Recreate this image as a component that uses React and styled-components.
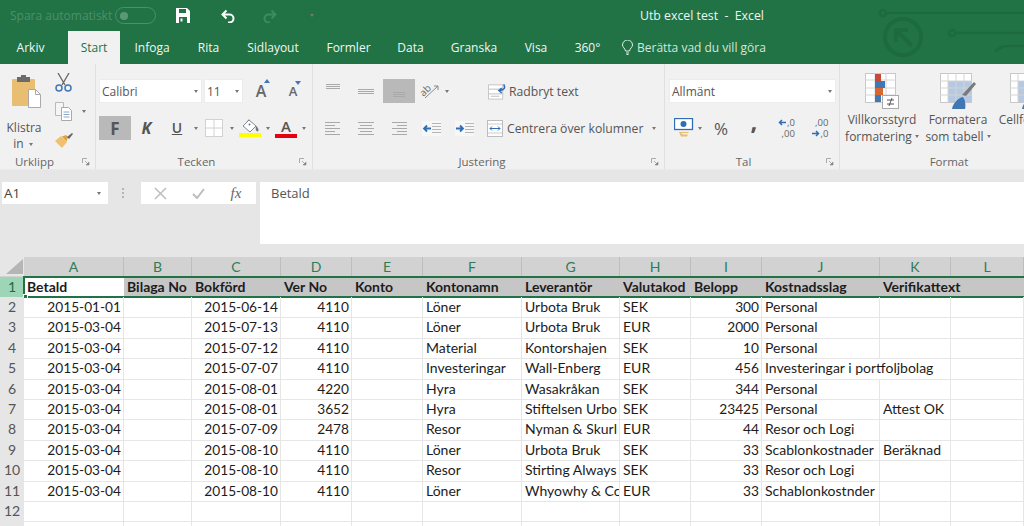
import React from 'react'
import styled, { createGlobalStyle } from 'styled-components'

const GlobalStyle = createGlobalStyle`
  html, body { margin: 0; padding: 0; height: 526px; overflow: hidden; background: #fff; }
  body { font-family: "Open Sans", "Noto Sans", sans-serif; }
  #root { width: 1024px; height: 526px; overflow: hidden; }
`

const GREEN = '#217346'
const COLUMNS = '24px 100px 68px 89px 71px 71px 99px 98px 71px 71px 118px 71px 73px'

const Page = styled.div`
  width: 1024px;
  height: 526px;
  overflow: hidden;
  display: flex;
  flex-direction: column;
  background: #e6e6e6;
`

const Header = styled.header`
  position: relative;
  background: ${GREEN};
  color: #fff;
  height: 64px;
  flex: none;
`

const Circuit = styled.svg`
  position: absolute;
  right: 0;
  top: 0;
`

const TitleBar = styled.div`
  position: relative;
  height: 31px;
  display: flex;
  align-items: center;
  padding-left: 10px;
  font-size: 12px;
`

const AutoSave = styled.span`
  color: #4d8f6b;
  width: 105px;
  white-space: nowrap;
`

const Toggle = styled.span`
  width: 35px;
  height: 15px;
  border: 1px solid #4d8f6b;
  border-radius: 9px;
  display: flex;
  align-items: center;
  padding-left: 4px;
  margin-right: 9px;
  flex: none;
`

const ToggleKnob = styled.span`
  width: 8px;
  height: 8px;
  border-radius: 50%;
  background: #5b9878;
`

const QuickSlot = styled.span`
  width: ${p => p.$w}px;
  display: flex;
  justify-content: center;
  flex: none;
`

const WindowTitle = styled.span`
  margin-left: 301px;
  white-space: pre;
  font-size: 12.3px;
  color: #eef5f1;
`

const TabBar = styled.nav`
  position: relative;
  height: 33px;
  display: flex;
  padding-left: 3px;
  font-size: 12px;
`

const Tab = styled.div`
  width: ${p => p.$w}px;
  margin-left: ${p => p.$gap || 0}px;
  display: flex;
  align-items: center;
  justify-content: center;
  color: ${p => (p.$active ? GREEN : '#f1f7f4')};
  background: ${p => (p.$active ? '#f1f1f1' : 'transparent')};
  flex: none;
`

const TellMe = styled.div`
  margin-left: 8px;
  display: flex;
  align-items: center;
  gap: 4px;
  color: #d5e6dc;
  white-space: nowrap;
`

const Ribbon = styled.section`
  height: 106px;
  flex: none;
  display: flex;
  background: #f1f1f1;
  border-bottom: 1px solid #eaeaea;
  box-sizing: border-box;
  color: #555;
  font-size: 12px;
`

const Group = styled.div`
  width: ${p => p.$w}px;
  flex: none;
  display: flex;
  flex-direction: column;
  border-right: 1px solid #e0e0e0;
  box-sizing: border-box;
  &:last-child { border-right: 0; }
`

const GroupBody = styled.div`
  height: 91px;
  flex: none;
  padding: 15px 0 0 ${p => p.$left || 0}px;
  display: flex;
  flex-direction: column;
  gap: 13px;
  box-sizing: border-box;
`

const GroupLabel = styled.div`
  height: 14px;
  flex: none;
  display: grid;
  grid-template-columns: 1fr auto 1fr;
  align-items: center;
  padding-right: ${p => p.$right ?? 5}px;
  font-size: 11.5px;
  color: #666;
  line-height: 14px;
  margin-left: ${p => p.$left || 0}px;
`

const GroupName = styled.span`
  grid-column: 2;
  margin-left: ${p => p.$shift || 0}px;
`

const Launcher = styled.svg`
  justify-self: end;
  grid-column: 3;
`

const Row = styled.div`
  display: flex;
  align-items: center;
  height: 24px;
  flex: none;
`

const Slot = styled.div`
  width: ${p => p.$w}px;
  height: 24px;
  margin-left: ${p => p.$ml || 0}px;
  display: flex;
  align-items: center;
  justify-content: center;
  flex: none;
  background: ${p => (p.$on ? '#b9b9b9' : 'transparent')};
`

const Caret = styled.span`
  width: 0;
  height: 0;
  display: block;
  flex: none;
  margin: 0 ${p => p.$m ?? 2}px;
  border-left: 2.5px solid transparent;
  border-right: 2.5px solid transparent;
  border-top: 3px solid #777;
`

const InlineCaret = styled(Caret)`
  display: inline-block;
  vertical-align: 2px;
`

const ComboBox = styled.div`
  width: ${p => p.$w}px;
  height: 24px;
  margin-right: ${p => p.$mr || 0}px;
  background: #fff;
  border: 1px solid #ececec;
  box-sizing: border-box;
  display: flex;
  align-items: center;
  justify-content: space-between;
  padding: 0 1px 0 2px;
  color: #555;
  flex: none;
`

const PasteGrid = styled.div`
  height: 91px;
  flex: none;
  display: grid;
  grid-template-columns: 48px 47px;
`

const PasteColumn = styled.div`
  display: flex;
  flex-direction: column;
  align-items: center;
  padding-top: 11px;
  line-height: 16px;
  text-align: center;
  gap: 11px;
  color: #555;
`

const PasteSvg = styled.svg`
  margin-left: 5px;
`

const ClipColumn = styled.div`
  display: flex;
  flex-direction: column;
  padding: 8px 0 0 7px;
  gap: 9px;
`

const ClipRow = styled.div`
  display: flex;
  align-items: center;
  height: 20px;
  gap: 8px;
`

const BoldLetter = styled.span`
  font-weight: ${p => p.$weight || 700};
  font-size: ${p => p.$size || 16}px;
  font-style: ${p => (p.$italic ? 'italic' : 'normal')};
  text-decoration: ${p => (p.$under ? 'underline' : 'none')};
  color: #555;
  line-height: 1;
`

const CommaMark = styled(BoldLetter)`
  font-size: 24px;
  margin-top: -15px;
`

const PercentSign = styled.span`
  font-size: 17px;
`

const GrowLetter = styled.span`
  position: relative;
  font-size: ${p => p.$size}px;
  color: #666;
  line-height: 1;
  font-weight: 600;
`

const GrowMark = styled.svg`
  position: absolute;
  top: -4px;
  right: -4px;
`

const ColorStack = styled.div`
  display: flex;
  flex-direction: column;
  align-items: center;
  width: 22px;
`

const ColorBar = styled.span`
  display: block;
  width: 22px;
  height: 4px;
  background: ${p => p.$color};
`

const ActionText = styled.span`
  margin-left: ${p => p.$ml}px;
  font-size: 12.2px;
  white-space: nowrap;
  color: #555;
`

const OrientBox = styled.span`
  position: relative;
  width: 20px;
  height: 16px;
  display: block;
`

const OrientText = styled.span`
  position: absolute;
  left: 0;
  top: 1px;
  font-size: 10px;
  line-height: 12px;
  color: #666;
  transform: rotate(-45deg);
`

const OrientArrow = styled.svg`
  position: absolute;
  left: 0;
  top: 0;
`

const StyleColumns = styled.div`
  height: 91px;
  flex: none;
  padding: 9px 0 0 4px;
  box-sizing: border-box;
  display: flex;
`

const StyleButton = styled.div`
  width: ${p => p.$w || 76}px;
  flex: none;
  display: flex;
  flex-direction: column;
  align-items: center;
  text-align: center;
  line-height: 17px;
  font-size: 12px;
  white-space: nowrap;
  color: #555;
`

const StyleLine = styled.span`
  display: flex;
  align-items: center;
  gap: 3px;
  height: 17px;
  margin-top: ${p => p.$top || 0}px;
`

const FormulaArea = styled.section`
  height: 87px;
  flex: none;
  display: flex;
  align-items: flex-start;
  padding: 12px 0 0 2px;
  box-sizing: border-box;
  background: #e6e6e6;
`

const NameBox = styled.div`
  width: 106px;
  height: 22px;
  background: #fff;
  display: flex;
  align-items: center;
  justify-content: space-between;
  padding: 0 5px 0 2px;
  box-sizing: border-box;
  font-size: 13.5px;
  color: #444;
  flex: none;
`

const Grip = styled.div`
  width: 30px;
  height: 22px;
  margin-right: 3px;
  flex: none;
  display: flex;
  flex-direction: column;
  align-items: center;
  justify-content: center;
  gap: 2px;
`

const GripDot = styled.span`
  width: 2px;
  height: 2px;
  background: #b5b5b5;
`

const FormulaButtons = styled.div`
  width: 115px;
  height: 22px;
  margin-right: 4px;
  flex: none;
  background: #fff;
  display: flex;
  align-items: center;
`

const FxSlot = styled.span`
  width: 38px;
  display: flex;
  justify-content: center;
  font-family: "Liberation Serif", serif;
  font-style: italic;
  font-size: 15px;
  color: #666;
`

const FormulaInput = styled.div`
  flex: 1;
  height: 62px;
  background: #fff;
  padding: 2px 0 0 11px;
  box-sizing: border-box;
  font-size: 13px;
  line-height: 18px;
  color: #555;
`

const Sheet = styled.section`
  flex: 1;
  background: #fff;
  font-family: Lato, "Liberation Sans", sans-serif;
  font-size: 14px;
  color: #1c1c1c;
  overflow: hidden;
`

const ColumnHeaderRow = styled.div`
  display: grid;
  grid-template-columns: ${COLUMNS};
  height: 20px;
  background: #d2d2d2;
`

const Corner = styled.div`
  background: #e6e6e6;
  display: flex;
  align-items: flex-end;
  justify-content: flex-end;
  padding: 0 1px 2px 0;
`

const ColumnHeader = styled.div`
  display: flex;
  align-items: center;
  justify-content: center;
  border-right: 1px solid #bdbdbd;
  color: #2e7d58;
  font-size: 14px;
`

const SheetRow = styled.div`
  position: relative;
  display: grid;
  grid-template-columns: ${COLUMNS};
  height: ${p => p.$h}px;
  line-height: ${p => p.$h}px;
  background: ${p => p.$bg || 'transparent'};
`

const RowHeader = styled.div`
  text-align: center;
  background: ${p => (p.$active ? '#9fd5b7' : '#e6e6e6')};
  color: ${p => (p.$active ? '#1c6b43' : '#555')};
  border-bottom: 1px solid #d6d6d6;
  box-sizing: border-box;
`

const Cell = styled.div`
  padding: 0 ${p => (p.$right ? 2 : 0)}px 0 ${p => (p.$right ? 0 : 3)}px;
  text-align: ${p => (p.$right ? 'right' : 'left')};
  white-space: nowrap;
  overflow: ${p => (p.$spill ? 'visible' : 'hidden')};
  min-width: 0;
  box-sizing: border-box;
  border-right: ${p => (p.$spill ? '0' : '1px solid #e6e6e6')};
  border-bottom: 1px solid #e6e6e6;
  font-size: ${p => (p.$right ? '13.7px' : '14px')};
`

const HeadCell = styled.div`
  padding-left: 3px;
  white-space: nowrap;
  overflow: ${p => (p.$spill ? 'visible' : 'hidden')};
  min-width: 0;
  font-weight: 700;
  background: ${p => (p.$first ? '#fff' : 'transparent')};
`

const Selection = styled.div`
  position: absolute;
  left: 23px;
  right: 0;
  top: -1px;
  bottom: -1px;
  border: 2px solid ${GREEN};
  border-right: 0;
  pointer-events: none;
`

const FillHandle = styled.span`
  position: absolute;
  left: -2px;
  bottom: -3px;
  width: 5px;
  height: 5px;
  background: ${GREEN};
  border: 1px solid #fff;
  box-sizing: border-box;
`

const DecimalText = styled.span`
  display: flex;
  flex-direction: column;
  font-size: 9.5px;
  line-height: 11px;
  color: #666;
  align-items: flex-end;
`

const DecimalLine = styled.span`
  display: flex;
  align-items: center;
  gap: 1px;
`

const RedoSvg = styled.svg`
  transform: ${p => (p.$flip ? 'scaleX(-1)' : 'none')};
`

const HEAD = ['Betald', 'Bilaga No', 'Bokförd', 'Ver No', 'Konto', 'Kontonamn', 'Leverantör', 'Valutakod', 'Belopp', 'Kostnadsslag', 'Verifikattext', '']
const LETTERS = 'ABCDEFGHIJKL'.split('')

const DATA = [
  ['2015-01-01', '2015-06-14', '4110', 'Löner', 'Urbota Bruk', 'SEK', '300', 'Personal', ''],
  ['2015-03-04', '2015-07-13', '4110', 'Löner', 'Urbota Bruk', 'EUR', '2000', 'Personal', ''],
  ['2015-03-04', '2015-07-12', '4110', 'Material', 'Kontorshajen', 'SEK', '10', 'Personal', ''],
  ['2015-03-04', '2015-07-07', '4110', 'Investeringar', 'Wall-Enberg', 'EUR', '456', 'Investeringar i portfoljbolag', ''],
  ['2015-03-04', '2015-08-01', '4220', 'Hyra', 'Wasakråkan', 'SEK', '344', 'Personal', ''],
  ['2015-03-04', '2015-08-01', '3652', 'Hyra', 'Stiftelsen Urbo', 'SEK', '23425', 'Personal', 'Attest OK'],
  ['2015-03-04', '2015-07-09', '2478', 'Resor', 'Nyman & Skurl', 'EUR', '44', 'Resor och Logi', ''],
  ['2015-03-04', '2015-08-10', '4110', 'Löner', 'Urbota Bruk', 'SEK', '33', 'Scablonkostnader', 'Beräknad'],
  ['2015-03-04', '2015-08-10', '4110', 'Resor', 'Stirting Always', 'SEK', '33', 'Resor och Logi', ''],
  ['2015-03-04', '2015-08-10', '4110', 'Löner', 'Whyowhy & Cc', 'EUR', '33', 'Schablonkostnder', ''],
  ['', '', '', '', '', '', '', '', ''],
  ['', '', '', '', '', '', '', '', ''],
]

const LauncherIcon = () => (
  <Launcher width="8" height="8" viewBox="0 0 8 8">
    <path d="M.5 5V.5H5" fill="none" stroke="#aaa" />
    <path d="M3 3l3 3M7 4v3H4z" fill="#888" stroke="#888" strokeWidth=".6" />
  </Launcher>
)

const PasteIcon = () => (
  <PasteSvg width="30" height="34" viewBox="0 0 30 34">
    <rect x="0" y="4" width="23" height="27" rx="1" fill="#e9bd72" />
    <rect x="5" y="2" width="13" height="5" fill="#6b6b6b" />
    <rect x="9" y="0" width="5" height="3" fill="#6b6b6b" />
    <path d="M16.500 14.500h7l5 5v13h-12z" fill="#fff" stroke="#aaa" />
    <path d="M23.500 14.500v5h5" fill="none" stroke="#aaa" />
  </PasteSvg>
)

const ScissorsIcon = () => (
  <svg width="17" height="19" viewBox="0 0 17 19">
    <path d="M3 0l7 12M14 0L7 12" stroke="#666" strokeWidth="1.300" fill="none" />
    <circle cx="4" cy="15" r="3" fill="none" stroke="#3f78b5" strokeWidth="1.500" />
    <circle cx="13" cy="15" r="3" fill="none" stroke="#3f78b5" strokeWidth="1.500" />
  </svg>
)

const CopyIcon = () => (
  <svg width="17" height="19" viewBox="0 0 17 19">
    <path d="M.5.500h8v13h-8z" fill="#f5f5f5" stroke="#b9b9b9" />
    <path d="M6.500 5.500h7l3 3v10h-10z" fill="#fff" stroke="#a9a9a9" />
    <path d="M8.500 10h6M8.500 12.500h6M8.500 15h6" stroke="#8aa7c4" />
  </svg>
)

const BrushIcon = () => (
  <svg width="18" height="15" viewBox="0 0 18 15">
    <path d="M0 8l6-5 6 6-5 6z" fill="#eec06f" />
    <path d="M7 3.500l4-1.500 2 2-1.500 4.500z" fill="#d9a441" />
    <path d="M12 4l5-4 1 1-4 5z" fill="#666" />
  </svg>
)

const BordersIcon = () => (
  <svg width="18" height="18" viewBox="0 0 18 18">
    <rect x=".5" y=".5" width="17" height="17" fill="#fff" stroke="#d2d2d2" />
    <path d="M9 0v18M0 9h18" stroke="#d2d2d2" />
  </svg>
)

const BucketIcon = () => (
  <svg width="20" height="14" viewBox="0 0 20 14">
    <path d="M9 1l7 6-6 6-7-6z" fill="#fff" stroke="#888" />
    <path d="M7 2.500L9.500 0M16 7c1 1 3 3 2 5-1 .8-2-.5-2-2z" fill="#777" stroke="#777" strokeWidth=".5" />
    <circle cx="9.500" cy="5.500" r="1" fill="#4a7ebb" />
  </svg>
)

const Lines = ({ rows, w = 16 }) => (
  <svg width={w} height="16" viewBox={`0 0 ${w} 16`}>
    {rows.map(([x1, x2, y]) => (
      <path key={`${x1}-${y}`} d={`M${x1} ${y + 0.5}H${x2}`} stroke="#a9a9a9" />
    ))}
  </svg>
)

const topLines = [[1, 15, 1], [1, 15, 3], [1, 15, 5]]
const midLines = [[0, 16, 6], [0, 16, 8], [0, 16, 10]]
const botLines = [[2, 14, 9], [2, 14, 11], [2, 14, 13]]
const leftLines = [[0, 15, 2], [0, 10, 5], [0, 15, 8], [0, 10, 11], [0, 15, 14]]
const centerLines = [[0, 16, 2], [2, 14, 5], [0, 16, 8], [2, 14, 11], [0, 16, 14]]
const rightLines = [[1, 16, 2], [6, 16, 5], [1, 16, 8], [6, 16, 11], [1, 16, 14]]

const OrientIcon = () => (
  <OrientBox>
    <OrientText>ab</OrientText>
    <OrientArrow width="20" height="16" viewBox="0 0 20 16">
      <path d="M6 15L19 3M19 3h-4M19 3v4" stroke="#888" fill="none" />
    </OrientArrow>
  </OrientBox>
)

const IndentIcon = ({ flip }) => (
  <svg width="19" height="15" viewBox="0 0 19 15">
    <rect width="19" height="15" fill="#f7f7f7" />
    <path d="M10 2.500h9M10 5.500h9M10 8.500h9M10 11.500h9" stroke="#b5b5b5" />
    <path d={flip ? 'M9 7.500H2M5 4.500l-3 3 3 3' : 'M1 7.500h7M5 4.500l3 3-3 3'} stroke="#2f6eb5" strokeWidth="1.800" fill="none" />
  </svg>
)

const WrapIcon = () => (
  <svg width="19" height="17" viewBox="0 0 19 17">
    <rect x=".5" y="1.500" width="15" height="15" fill="#fff" stroke="#c4c4c4" />
    <path d="M1 6h15M1 11h15M3 13.500h9" stroke="#bcbcbc" />
    <path d="M16.500 1c2 3 1 6-4 6.500M14.500 5l-3 2.500 3 2.500" stroke="#2f6eb5" strokeWidth="1.600" fill="none" />
  </svg>
)

const MergeIcon = () => (
  <svg width="16" height="17" viewBox="0 0 16 17">
    <rect x=".5" y=".5" width="15" height="16" fill="#fff" stroke="#bdbdbd" />
    <path d="M1 4h14M1 13h14" stroke="#ccc" />
    <path d="M3 8.500h10M5 6.500l-2 2 2 2M11 6.500l2 2-2 2" stroke="#2f6eb5" fill="none" />
  </svg>
)

const CurrencyIcon = () => (
  <svg width="20" height="20" viewBox="0 0 20 20">
    <rect x=".5" y=".5" width="18" height="11" fill="#fff" stroke="#2f6eb5" strokeWidth="1.300" />
    <circle cx="9.500" cy="6" r="3" fill="#2f6eb5" />
    <path d="M5 14h9l1 1H7l2 1.500H14l-1 2H7z" fill="#e8bd71" />
  </svg>
)

const SmallArrow = ({ left }) => (
  <svg width="8" height="7" viewBox="0 0 8 7">
    <path d={left ? 'M8 3.500H2M4 1L1.500 3.500 4 6' : 'M0 3.500h6M4 1l2.500 2.500L4 6'} stroke="#2f6eb5" strokeWidth="1.500" fill="none" />
  </svg>
)

const ConditionalIcon = () => (
  <svg width="34" height="36" viewBox="0 0 34 36">
    <rect x=".5" y=".5" width="30" height="29" fill="#fff" stroke="#c8c8c8" />
    <path d="M10 0v30M21 0v30M0 7h31M0 15h31M0 22h31" stroke="#d4d4d4" />
    <rect x="10" y="1" width="6" height="7" fill="#c8493a" />
    <rect x="10" y="8" width="10" height="7" fill="#3f78b5" />
    <rect x="10" y="15" width="8" height="7" fill="#d9662f" />
    <rect x="10" y="22" width="6" height="7" fill="#3f78b5" />
    <rect x="17.500" y="22.500" width="16" height="13" fill="#fff" stroke="#aaa" />
    <path d="M22 27h7M22 31h7M27 25l-3 8" stroke="#555" fill="none" />
  </svg>
)

const TableIcon = () => (
  <svg width="36" height="36" viewBox="0 0 36 36">
    <rect x=".5" y=".5" width="31" height="29" fill="#fff" stroke="#c8c8c8" />
    <rect x="8" y="8" width="23" height="21" fill="#b5c9e2" />
    <path d="M8 0v30M16 0v30M24 0v30M0 8h32M0 15h32M0 22h32" stroke="#d4d4d4" />
    <path d="M34 9l2 2-10 12-4-1z" fill="#7a7a7a" />
    <path d="M12 36c1-7 8-12 11-12 2 2 3 8 2 12z" fill="#3f78b5" />
  </svg>
)

const CloseIcon = () => (
  <svg width="13" height="13" viewBox="0 0 13 13">
    <path d="M1 1l11 11M12 1L1 12" stroke="#bdbdbd" strokeWidth="1.500" />
  </svg>
)

const CheckIcon = () => (
  <svg width="13" height="11" viewBox="0 0 13 11">
    <path d="M1 6l4 4 7-9" stroke="#bdbdbd" strokeWidth="2" fill="none" />
  </svg>
)

const SaveIcon = () => (
  <svg width="14" height="15" viewBox="0 0 14 15">
    <path d="M0 0h11l3 3v12H0z" fill="#fff" />
    <rect x="3" y="1" width="7" height="4" fill={GREEN} />
    <rect x="3" y="9" width="8" height="6" fill={GREEN} />
    <rect x="4.500" y="10.500" width="2" height="3" fill="#fff" />
  </svg>
)

const UndoIcon = ({ color, flip }) => (
  <RedoSvg width="14" height="14" viewBox="0 0 14 14" $flip={flip}>
    <path d="M2 5.500h6.500a4 4 0 0 1 0 8H7M5.500 1.500L1.500 5.500l4 4" fill="none" stroke={color} strokeWidth="2" />
  </RedoSvg>
)

const BulbIcon = () => (
  <svg width="11" height="15" viewBox="0 0 11 15">
    <path d="M3.500 11C3 8 .5 7.500.5 5a5 5 0 0 1 10 0c0 2.500-2.500 3-3 6zM4 13h3M4.500 14.500h2" fill="none" stroke="#dfeee6" />
  </svg>
)

const CircuitArt = () => (
  <Circuit width="160" height="64" viewBox="0 0 160 64">
    <g fill="none" stroke="#1c6a3e" strokeWidth="2.500">
      <circle cx="19" cy="13" r="3" />
      <path d="M22 13h138" />
      <circle cx="88" cy="33" r="3" />
      <path d="M91 33h69" />
      <path d="M131 52c4-5 8-6 14-6h15" />
      <circle cx="39" cy="37" r="18" strokeWidth="4" />
      <path d="M48 46L33 31M32 42V30h12" strokeWidth="4" />
    </g>
  </Circuit>
)

const App = () => {
  return (
    <Page>
      <GlobalStyle />
      <Header>
        <CircuitArt />
        <TitleBar>
          <AutoSave>Spara automatiskt</AutoSave>
          <Toggle><ToggleKnob /></Toggle>
          <QuickSlot $w={36}><SaveIcon /></QuickSlot>
          <QuickSlot $w={54}><UndoIcon color="#fff" /></QuickSlot>
          <QuickSlot $w={30}><UndoIcon color="#3f8a63" flip /></QuickSlot>
          <QuickSlot $w={54}><Caret $m={0} /></QuickSlot>
          <WindowTitle>{'Utb excel test  -  Excel'}</WindowTitle>
        </TitleBar>
        <TabBar>
          <Tab $w={55}>Arkiv</Tab>
          <Tab $w={52} $gap={10} $active>Start</Tab>
          <Tab $w={64}>Infoga</Tab>
          <Tab $w={49}>Rita</Tab>
          <Tab $w={80}>Sidlayout</Tab>
          <Tab $w={71}>Formler</Tab>
          <Tab $w={53}>Data</Tab>
          <Tab $w={74}>Granska</Tab>
          <Tab $w={50}>Visa</Tab>
          <Tab $w={53}>360°</Tab>
          <TellMe><BulbIcon />Berätta vad du vill göra</TellMe>
        </TabBar>
      </Header>

      <Ribbon>
        <Group $w={96}>
          <PasteGrid>
            <PasteColumn>
              <PasteIcon />
              <span>Klistra<br />in <InlineCaret /></span>
            </PasteColumn>
            <ClipColumn>
              <ClipRow><ScissorsIcon /></ClipRow>
              <ClipRow><CopyIcon /><Caret /></ClipRow>
              <ClipRow><BrushIcon /></ClipRow>
            </ClipColumn>
          </PasteGrid>
          <GroupLabel>
            <GroupName $shift={-21}>Urklipp</GroupName>
            <LauncherIcon />
          </GroupLabel>
        </Group>

        <Group $w={217}>
          <GroupBody $left={3}>
            <Row>
              <ComboBox $w={103} $mr={2}>Calibri<Caret /></ComboBox>
              <ComboBox $w={39}>11<Caret /></ComboBox>
              <Slot $w={36}>
                <GrowLetter $size={16}>A
                  <GrowMark width="6" height="4" viewBox="0 0 6 4"><path d="M0 4l3-4 3 4z" fill="#3f78b5" /></GrowMark>
                </GrowLetter>
              </Slot>
              <Slot $w={28}>
                <GrowLetter $size={13}>A
                  <GrowMark width="6" height="4" viewBox="0 0 6 4"><path d="M0 0l3 4 3-4z" fill="#3f78b5" /></GrowMark>
                </GrowLetter>
              </Slot>
            </Row>
            <Row>
              <Slot $w={32} $on><BoldLetter $size={17}>F</BoldLetter></Slot>
              <Slot $w={31}><BoldLetter $size={16} $italic>K</BoldLetter></Slot>
              <Slot $w={30}><BoldLetter $size={14} $under $weight={600}>U</BoldLetter></Slot>
              <Slot $w={8}><Caret $m={0} /></Slot>
              <Slot $w={28}><BordersIcon /></Slot>
              <Slot $w={8}><Caret $m={0} /></Slot>
              <Slot $w={28}>
                <ColorStack><BucketIcon /><ColorBar $color="#ffff00" /></ColorStack>
              </Slot>
              <Slot $w={8}><Caret $m={0} /></Slot>
              <Slot $w={28}>
                <ColorStack><BoldLetter $size={15} $weight={600}>A</BoldLetter><ColorBar $color="#e60012" /></ColorStack>
              </Slot>
              <Slot $w={8}><Caret $m={0} /></Slot>
            </Row>
          </GroupBody>
          <GroupLabel>
            <GroupName $shift={-10}>Tecken</GroupName>
            <LauncherIcon />
          </GroupLabel>
        </Group>

        <Group $w={352}>
          <GroupBody $left={3}>
            <Row>
              <Slot $w={33}><Lines rows={topLines} /></Slot>
              <Slot $w={33}><Lines rows={midLines} /></Slot>
              <Slot $w={32} $ml={1} $on><Lines rows={botLines} /></Slot>
              <Slot $w={28}><OrientIcon /></Slot>
              <Slot $w={8}><Caret $m={0} /></Slot>
              <Slot $w={18} $ml={37}><WrapIcon /></Slot>
              <ActionText $ml={3}>Radbryt text</ActionText>
            </Row>
            <Row>
              <Slot $w={33}><Lines rows={leftLines} /></Slot>
              <Slot $w={33}><Lines rows={centerLines} /></Slot>
              <Slot $w={33}><Lines rows={rightLines} /></Slot>
              <Slot $w={33}><IndentIcon flip /></Slot>
              <Slot $w={33}><IndentIcon /></Slot>
              <Slot $w={16} $ml={6}><MergeIcon /></Slot>
              <ActionText $ml={4}>Centrera över kolumner</ActionText>
              <Slot $w={8} $ml={7}><Caret $m={0} /></Slot>
            </Row>
          </GroupBody>
          <GroupLabel>
            <GroupName $shift={-8}>Justering</GroupName>
            <LauncherIcon />
          </GroupLabel>
        </Group>

        <Group $w={175}>
          <GroupBody $left={4}>
            <Row>
              <ComboBox $w={167}>Allmänt<Caret /></ComboBox>
            </Row>
            <Row>
              <Slot $w={26} $ml={2}><CurrencyIcon /></Slot>
              <Slot $w={6}><Caret $m={0} /></Slot>
              <Slot $w={36}><PercentSign>%</PercentSign></Slot>
              <Slot $w={30}><CommaMark>,</CommaMark></Slot>
              <Slot $w={35}>
                <DecimalText>
                  <DecimalLine><SmallArrow left />,0</DecimalLine>
                  <DecimalLine>,00</DecimalLine>
                </DecimalText>
              </Slot>
              <Slot $w={32}>
                <DecimalText>
                  <DecimalLine>,00</DecimalLine>
                  <DecimalLine><SmallArrow />,0</DecimalLine>
                </DecimalText>
              </Slot>
            </Row>
          </GroupBody>
          <GroupLabel>
            <GroupName $shift={-12}>Tal</GroupName>
            <LauncherIcon />
          </GroupLabel>
        </Group>

        <Group $w={184}>
          <StyleColumns>
            <StyleButton>
              <ConditionalIcon />
              <StyleLine $top={2}>Villkorsstyrd</StyleLine>
              <StyleLine>formatering<Caret $m={0} /></StyleLine>
            </StyleButton>
            <StyleButton>
              <TableIcon />
              <StyleLine $top={2}>Formatera</StyleLine>
              <StyleLine>som tabell<Caret $m={0} /></StyleLine>
            </StyleButton>
            <StyleButton $w={64}>
              <TableIcon />
              <StyleLine $top={2}>Cellformat</StyleLine>
              <StyleLine><Caret $m={0} /></StyleLine>
            </StyleButton>
          </StyleColumns>
          <GroupLabel $left={34} $right={0}>
            <GroupName>Format</GroupName>
          </GroupLabel>
        </Group>
      </Ribbon>

      <FormulaArea>
        <NameBox>A1<Caret /></NameBox>
        <Grip><GripDot /><GripDot /><GripDot /></Grip>
        <FormulaButtons>
          <FxSlot><CloseIcon /></FxSlot>
          <FxSlot><CheckIcon /></FxSlot>
          <FxSlot>fx</FxSlot>
        </FormulaButtons>
        <FormulaInput>Betald</FormulaInput>
      </FormulaArea>

      <Sheet>
        <ColumnHeaderRow>
          <Corner>
            <svg width="17" height="15" viewBox="0 0 17 15"><path d="M17 0v15H0z" fill="#b5b5b5" /></svg>
          </Corner>
          {LETTERS.map(l => <ColumnHeader key={l}>{l}</ColumnHeader>)}
          <ColumnHeader />
        </ColumnHeaderRow>

        <SheetRow $h={20} $bg="#c6c6c6">
          <RowHeader $active>1</RowHeader>
          {HEAD.map((text, i) => (
            <HeadCell key={LETTERS[i]} $first={i === 0} $spill={i === 10}>{text}</HeadCell>
          ))}
          <HeadCell />
          <Selection><FillHandle /></Selection>
        </SheetRow>

        {DATA.map((row, index) => {
          const [betald, bokford, verNo, konto, lev, valuta, belopp, slag, text] = row
          return (
            <SheetRow key={index} $h={20.4}>
              <RowHeader>{index + 2}</RowHeader>
              <Cell $right>{betald}</Cell>
              <Cell />
              <Cell $right>{bokford}</Cell>
              <Cell $right>{verNo}</Cell>
              <Cell />
              <Cell>{konto}</Cell>
              <Cell>{lev}</Cell>
              <Cell>{valuta}</Cell>
              <Cell $right>{belopp}</Cell>
              <Cell $spill={text === '' && slag.length > 20}>{slag}</Cell>
              <Cell>{text}</Cell>
              <Cell />
              <Cell />
            </SheetRow>
          )
        })}
      </Sheet>
    </Page>
  )
}

export default App
